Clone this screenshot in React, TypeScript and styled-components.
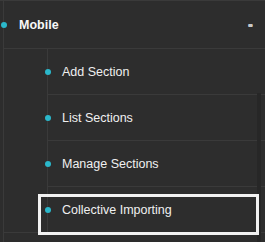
import React from "react";
import styled, { createGlobalStyle } from "styled-components";

const Global = createGlobalStyle`
  html, body { margin: 0; padding: 0; background: #2d2d2d; }
  body { font-family: "Liberation Sans", Arial, sans-serif; }
`;

const Page = styled.div`
  position: relative;
  width: 265px;
  height: 242px;
  overflow: hidden;
  background: #2d2d2d;
  border-top: 1px solid #3a3a3a;
  box-sizing: border-box;
`;

const Tree = styled.div`
  margin-left: 3px;
  min-height: 241px;
  border-left: 1px solid #3a3a3a;
  box-sizing: border-box;
`;

const Item = styled.div`
  border-bottom: 1px solid #3a3a3a;
`;

const Header = styled.div`
  display: flex;
  align-items: center;
  height: 47px;
  border-bottom: 1px solid #3a3a3a;
  padding-right: 12px;
`;

const Dot = styled.span`
  flex: none;
  width: 6px;
  height: 6px;
  border-radius: 50%;
  background: #2bb8cb;
  margin-left: -3px;
`;

const Title = styled.span<{ $bold?: boolean }>`
  flex: 1;
  margin-left: ${(p) => (p.$bold ? 12 : 11)}px;
  font-size: 12.5px;
  font-weight: ${(p) => (p.$bold ? 700 : 400)};
  color: ${(p) => (p.$bold ? "#f8f8f8" : "#f0f0f0")};
  white-space: nowrap;
`;

const Toggle = styled.span`
  font-size: 16px;
  font-weight: 700;
  line-height: 1;
  color: #c8c8c8;
  text-shadow: 0 1px 0 #c8c8c8;
  margin-top: -1px;
`;

const SubList = styled.div`
  margin-left: 43px;
  border-left: 1px solid #3a3a3a;
`;

const SubRow = styled.div<{ $focused?: boolean }>`
  position: relative;
  display: flex;
  align-items: center;
  height: 45px;
  &:not(:last-child) {
    border-bottom: 1px solid #3a3a3a;
  }
  ${(p) =>
    p.$focused &&
    `
    &::after {
      content: "";
      position: absolute;
      left: -10px;
      top: 7px;
      width: 221px;
      height: 41px;
      border: 3px solid #f2f2f2;
      box-sizing: border-box;
      z-index: 2;
    }
  `}
`;

const Track = styled.div`
  position: absolute;
  right: 4px;
  top: 92px;
  bottom: 0;
  width: 4px;
  background: #272727;
  z-index: 1;
`;

const items = ["Add Section", "List Sections", "Manage Sections", "Collective Importing"];

export default function App() {
  return (
    <>
      <Global />
      <Page>
        <Tree>
          <Item>
            <Header>
              <Dot />
              <Title $bold>Mobile</Title>
              <Toggle>-</Toggle>
            </Header>
            <SubList>
              {items.map((label, i) => (
                <SubRow key={label} $focused={i === items.length - 1}>
                  <Dot />
                  <Title>{label}</Title>
                </SubRow>
              ))}
            </SubList>
          </Item>
        </Tree>
        <Track />
      </Page>
    </>
  );
}
